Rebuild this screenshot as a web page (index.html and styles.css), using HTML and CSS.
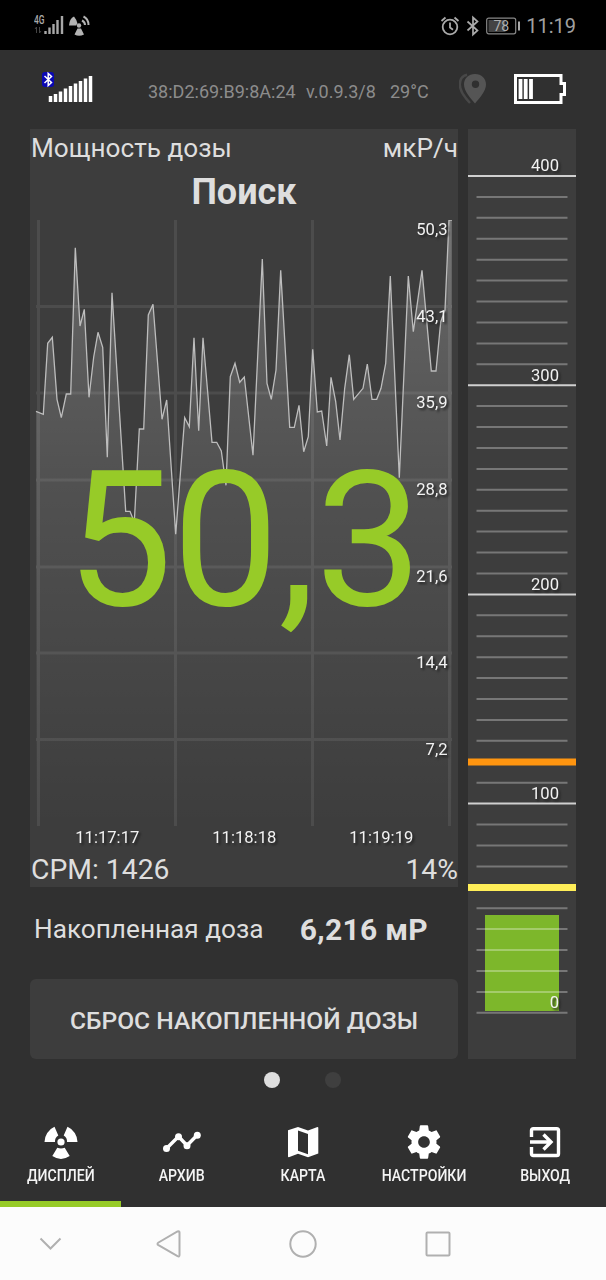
FILE: index.html
```html
<!DOCTYPE html>
<html lang="ru">
	<head>
		<meta charset="utf-8">
		<meta name="viewport" content="width=device-width, initial-scale=1.0">
		<title>Поиск</title>
		<link rel="stylesheet" href="styles.css">
	</head>
	<body>

		<!-- status bar -->
		<div class="status">
			<svg class="status-left" width="58" height="26" viewBox="0 0 58 26">
				<text class="net" x="0" y="11" textLength="10.500" lengthAdjust="spacingAndGlyphs">4G</text>
				<path d="M2.500 20v-6l-1.500 2M5.500 14v6l1.500-2" stroke="#444" fill="none"/>
				<path d="M11.500 18v3M15.500 14.500v6.500M19.500 11v10M23.500 7v14M28 3v18" stroke="#a8a8a8" stroke-width="2.400"/>
				<g fill="#b4b4b4">
					<circle cx="45" cy="12.500" r="2.200"/>
					<path d="M35 12.500q.500-7 5-9q2.500 3 3.500 7l-1.500 2zM43.500 15.500h3.500l3 6q-5 2.500-9.500 0z"/>
				</g>
				<path d="M48 7.500q3 1.500 3 4.500M49.500 3.500q5 2.500 5 8.500" stroke="#b4b4b4" stroke-width="2" fill="none"/>
			</svg>
			<div class="status-right">
				<svg width="20" height="22" viewBox="0 0 20 22" fill="none" stroke="#aaa" stroke-width="1.800">
					<circle cx="10" cy="12" r="7.300"/>
					<path d="M10 7.500v5l3 2.200M1.500 6l4-3.500M18.500 6l-4-3.500"/>
				</svg>
				<svg width="14" height="22" viewBox="0 0 14 22" fill="none" stroke="#aaa" stroke-width="1.700">
					<path d="M1.500 6.500l10 9L7 19.500v-17l4.500 4-10 9"/>
				</svg>
				<svg width="35" height="18" viewBox="0 0 35 18">
					<rect x=".7" y="1.200" width="29" height="15.600" rx="2" fill="none" stroke="#888" stroke-width="1.200"/>
					<rect x="2.500" y="3" width="17" height="12" fill="#444"/>
					<path d="M33 4.500v9" stroke="#aaa" stroke-width="2"/>
					<text class="charge" x="7.500" y="14">78</text>
				</svg>
				<span class="clock">11:19</span>
			</div>
		</div>

		<!-- device line -->
		<div class="device">
			<svg class="signal" width="54" height="34" viewBox="0 0 54 34">
				<rect x="2" y="2" width="12" height="15" rx="3" fill="#0a08b4"/>
				<path d="M4.500 6l7 6.500-3.300 3V3.500l3.300 3-7 6.500" fill="none" stroke="#fff" stroke-width="1.500"/>
				<path d="M10.500 26v6M15.500 24v8M20.500 21.500v10.500M25.500 18.500v13.500M30.500 16v16M35.500 13.500v18.500M40.500 11v21M45.500 8.500v23.500M50.500 6v26" stroke="#fff" stroke-width="3.500"/>
			</svg>
			<div class="device-info">
				<span class="mac">38:D2:69:B9:8A:24</span>
				<span class="version">v.0.9.3/8</span>
				<span>29°C</span>
			</div>
			<svg class="pin" width="28" height="32" viewBox="0 0 28 32">
				<path d="M8 1.800C3 3 .8 7 .8 11.500c0 6 4.500 12.500 10.200 18.500" fill="none" stroke="#484848" stroke-width="2.500"/>
				<path fill-rule="evenodd" fill="#555" d="M16 1C9.500 1 5 5.500 5 11.500c0 7 7 14 11 19 4-5 11-12 11-19C27 5.500 22.500 1 16 1zm.5 6.500a3.700 3.700 0 1 1 0 7.400 3.700 3.700 0 0 1 0-7.400z"/>
			</svg>
			<svg class="battery" width="52" height="30" viewBox="0 0 52 30">
				<path d="M1.500 1.500h45.500v8h3.500v11h-3.500v8h-45.500z" fill="none" stroke="#fff" stroke-width="3"/>
				<path d="M6.500 5v20M11.700 5v20M17 5v20" stroke="#fff" stroke-width="3.800"/>
			</svg>
		</div>

		<div class="main">
			<div class="left">
				<div class="rate">
					<div class="rate-head">
						<span class="rate-name">Мощность дозы</span>
						<span class="rate-unit">мкР/ч</span>
					</div>
					<div class="mode">Поиск</div>
					<svg class="chart" width="428" height="630" viewBox="30 220 428 630">
						<defs>
							<linearGradient id="area" gradientUnits="userSpaceOnUse" x1="0" y1="220" x2="0" y2="826">
								<stop offset="0" stop-color="#fff" stop-opacity=".22"/>
								<stop offset=".45" stop-color="#fff" stop-opacity=".1"/>
								<stop offset="1" stop-color="#fff" stop-opacity="0"/>
							</linearGradient>
						</defs>
						<path class="grid" d="M38.500 220V826M175.500 220V826M312.500 220V826M449.500 220V826M36 306.500H452M36 393H452M36 480H452M36 567H452M36 653H452M36 739.500H452"/>
						<path fill="url(#area)" d="M36 411.300L43.300 414.300 47.700 343.300 52.300 337.300 57 399.300 61.300 417.700 66.300 394 70.700 394 75.300 247.700 80 326 84.300 309.300 89 397.300 93.700 357 98 332.300 102.700 347.300 107.300 457.300 112 292.700 125.700 511.300 130 511.300 134.300 522 139.300 429 143.700 429 148.300 315 153 304.300 162 419.300 166.700 400 175.700 534.300 184.700 417.700 189.300 426.700 194 337.700 198.700 430.700 203 337.700 212 442.300 216.700 442.300 221.300 451 226 485.300 230.300 376.700 235 363.300 239.700 382.300 244.300 377 253 455.300 262.300 259 267 383.300 271.300 399.300 276 370 280.700 270.300 289.700 427.300 294.300 427.300 299 405.300 303.700 451.700 308.300 436.700 312.700 349.300 317.300 412 321.700 411 326.700 446 331 377.300 335.700 401.700 340 440 344.700 388.300 349.300 354.700 353.700 399.300 363 388.300 367.300 364 372 399.300 376.700 399.300 381 388.300 385.700 363.300 390.300 276 399.300 477.700 408.300 276 413.300 331.700 422 270.300 431.300 371 436 371 440.700 322 445 310 449 220 452 220V826H36z"/>
						<path class="line" d="M36 411.300L43.300 414.300 47.700 343.300 52.300 337.300 57 399.300 61.300 417.700 66.300 394 70.700 394 75.300 247.700 80 326 84.300 309.300 89 397.300 93.700 357 98 332.300 102.700 347.300 107.300 457.300 112 292.700 125.700 511.300 130 511.300 134.300 522 139.300 429 143.700 429 148.300 315 153 304.300 162 419.300 166.700 400 175.700 534.300 184.700 417.700 189.300 426.700 194 337.700 198.700 430.700 203 337.700 212 442.300 216.700 442.300 221.300 451 226 485.300 230.300 376.700 235 363.300 239.700 382.300 244.300 377 253 455.300 262.300 259 267 383.300 271.300 399.300 276 370 280.700 270.300 289.700 427.300 294.300 427.300 299 405.300 303.700 451.700 308.300 436.700 312.700 349.300 317.300 412 321.700 411 326.700 446 331 377.300 335.700 401.700 340 440 344.700 388.300 349.300 354.700 353.700 399.300 363 388.300 367.300 364 372 399.300 376.700 399.300 381 388.300 385.700 363.300 390.300 276 399.300 477.700 408.300 276 413.300 331.700 422 270.300 431.300 371 436 371 440.700 322 445 310 449 220 452 220"/>
						<g class="label" text-anchor="end">
							<text x="447.500" y="235">50,3</text>
							<text x="447.500" y="321.500">43,1</text>
							<text x="447.500" y="408">35,9</text>
							<text x="447.500" y="495">28,8</text>
							<text x="447.500" y="581.500">21,6</text>
							<text x="447.500" y="667.500">14,4</text>
							<text x="447.500" y="754.500">7,2</text>
						</g>
						<g class="label" text-anchor="middle">
							<text x="107.300" y="843">11:17:17</text>
							<text x="244.300" y="843">11:18:18</text>
							<text x="381.300" y="843">11:19:19</text>
						</g>
						<text class="value" x="66" y="605">50,3</text>
					</svg>
					<div class="rate-foot">
						<span>CPM: 1426</span>
						<span>14%</span>
					</div>
				</div>

				<div class="total">
					<span class="total-name">Накопленная доза</span>
					<span class="total-value">6,216 мР</span>
				</div>
				<button class="reset" type="button">СБРОС НАКОПЛЕННОЙ ДОЗЫ</button>
			</div>

			<!-- scale 0..400 -->
			<svg class="scale" width="108" height="930" viewBox="0 0 108 930">
				<rect x="17" y="786" width="74" height="96" fill="#7db72b"/>
				<path class="minor" d="M8.500 67.900h91M8.500 88.800h91M8.500 109.800h91M8.500 130.700h91M8.500 151.600h91M8.500 172.500h91M8.500 193.400h91M8.500 214.400h91M8.500 235.300h91M8.500 277.100h91M8.500 298h91M8.500 319h91M8.500 339.900h91M8.500 360.800h91M8.500 381.700h91M8.500 402.600h91M8.500 423.600h91M8.500 444.500h91M8.500 486.300h91M8.500 507.200h91M8.500 528.200h91M8.500 549.100h91M8.500 570h91M8.500 590.900h91M8.500 611.800h91M8.500 653.700h91M8.500 695.500h91M8.500 716.400h91M8.500 737.400h91M8.500 779.200h91M8.500 800.100h91M8.500 821h91M8.500 842h91M8.500 862.900h91M8.500 883.800h91"/>
				<path class="major" d="M0 47h108M0 256.200h108M0 465.400h108M0 674.600h108"/>
				<rect y="629.500" width="108" height="7" fill="#ff9510"/>
				<rect y="755" width="108" height="7" fill="#ffee58"/>
				<g class="label" text-anchor="end">
					<text x="91" y="42">400</text>
					<text x="91" y="252">300</text>
					<text x="91" y="461">200</text>
					<text x="91" y="670">100</text>
					<text x="91" y="879">0</text>
				</g>
			</svg>
		</div>

		<div class="dots">
			<span class="dot active"></span>
			<span class="dot"></span>
		</div>

		<div class="tabs">
			<div class="tab active">
				<svg width="36" height="36" viewBox="0 0 36 36" fill="#fff">
					<circle cx="18" cy="18" r="3.600"/>
					<path d="M1.500 18a16.500 16.500 0 0 1 10-15.200L15.300 11.500a7 7 0 0 0-3.300 6.500zM34.500 18a16.500 16.500 0 0 0-10-15.200L20.700 11.500a7 7 0 0 1 3.300 6.500zM14.300 23.800q3.700 1.600 7.400 0l5 8.200q-8.700 5.800-17.400 0z"/>
				</svg>
				<span>ДИСПЛЕЙ</span>
			</div>
			<div class="tab">
				<svg width="40" height="36" viewBox="0 0 40 36" fill="#fff">
					<path d="M4.500 24.500L16.500 12.500 25 21.500 35.300 11" fill="none" stroke="#fff" stroke-width="3.400"/>
					<circle cx="4.500" cy="24.500" r="3.500"/>
					<circle cx="16.500" cy="12.700" r="3.500"/>
					<circle cx="25" cy="21.700" r="3.500"/>
					<circle cx="35.300" cy="11.200" r="3.500"/>
				</svg>
				<span>АРХИВ</span>
			</div>
			<div class="tab">
				<svg width="36" height="36" viewBox="0 0 36 36">
					<path fill="#fff" fill-rule="evenodd" d="M3 6.300L13 3l10 3.500L32.500 3q.8 0 .8.800V29.500L23 33.200l-10-3.500L3.800 33.200Q3 33.200 3 32.500zM13 6.500v20.200l10 3.500V10z"/>
				</svg>
				<span>КАРТА</span>
			</div>
			<div class="tab">
				<svg width="40" height="40" viewBox="0 0 24 24">
					<path fill="#fff" d="M19.430 12.980c.04-.32.07-.64.07-.98s-.03-.66-.07-.98l2.110-1.650c.19-.15.24-.42.12-.64l-2-3.460c-.12-.22-.39-.3-.61-.22l-2.490 1c-.52-.4-1.080-.73-1.690-.98l-.38-2.650C14.460 2.180 14.250 2 14 2h-4c-.25 0-.46.18-.49.42l-.38 2.650c-.61.25-1.170.59-1.690.98l-2.490-1c-.23-.09-.49 0-.61.22l-2 3.460c-.13.22-.07.49.12.64l2.110 1.650c-.04.32-.07.65-.07.98s.03.66.07.98l-2.110 1.650c-.19.15-.24.42-.12.64l2 3.460c.12.22.39.3.61.22l2.490-1c.52.4 1.080.73 1.690.98l.38 2.650c.03.24.24.42.49.42h4c.25 0 .46-.18.49-.42l.38-2.650c.61-.25 1.170-.59 1.690-.98l2.490 1c.23.09.49 0 .61-.22l2-3.460c.12-.22.07-.49-.12-.64l-2.110-1.650zM12 15.500c-1.930 0-3.500-1.570-3.500-3.500s1.570-3.500 3.500-3.500 3.500 1.570 3.500 3.500-1.570 3.500-3.500 3.500z"/>
				</svg>
				<span>НАСТРОЙКИ</span>
			</div>
			<div class="tab">
				<svg width="36" height="36" viewBox="0 0 36 36" fill="none" stroke="#fff" stroke-width="3.400">
					<path d="M4.500 13V6.500q0-1.800 1.800-1.800H29.700q1.800 0 1.800 1.800V29.700q0 1.800-1.800 1.800H6.300q-1.800 0-1.800-1.800V23M3 18H24M16.500 10.500L24 18l-7.500 7.500"/>
				</svg>
				<span>ВЫХОД</span>
			</div>
		</div>

		<!-- android keys -->
		<div class="keys">
			<svg width="24" height="30" viewBox="0 0 24 30"><path d="M2.500 9.500l10 10 10-10"/></svg>
			<svg width="28" height="30" viewBox="0 0 28 30"><path d="M3.500 13.500L22.500 2.500q2-.8 2 1V26q0 2-2 1.100L3.500 16.200q-2-1.300 0-2.700z"/></svg>
			<svg width="30" height="30" viewBox="0 0 30 30"><circle cx="15" cy="15" r="12.700"/></svg>
			<svg width="28" height="30" viewBox="0 0 28 30"><rect x="2.500" y="3.500" width="23" height="23" rx="1"/></svg>
		</div>

	</body>
</html>
```
FILE: styles.css
```css
*{
	box-sizing: border-box;
}
body{
	margin: 0;
	width: 606px;
	height: 1280px;
	display: flex;
	flex-direction: column;
	overflow: hidden;
	background-color: #303030;
	color: #dedede;
	font-family: Roboto, "Noto Sans", sans-serif;
}
svg{
	display: block;
	flex: none;
}

/* status bar */
.status{
	height: 50px;
	padding: 2px 30px 0 34px;
	display: flex;
	align-items: center;
	justify-content: space-between;
	background-color: #000;
}
.net{
	font-size: 12px;
	font-weight: 500;
	fill: #aaa;
}
.status-right{
	display: flex;
	align-items: center;
	gap: 6px;
}
.charge{
	font-size: 14px;
	fill: #b0b0b0;
}
.clock{
	margin-left: -1px;
	font-size: 20px;
	color: #a0a0a0;
}

/* device line */
.device{
	height: 79px;
	padding: 0 40px;
	display: flex;
	align-items: center;
}
.signal{
	margin-top: -6px;
}
.device-info{
	margin-left: 54px;
	width: 311px;
	display: flex;
	font-size: 18px;
	color: #8c8c8c;
	white-space: nowrap;
	line-height: 24px;
	padding-top: 4px;
}
.mac{
	width: 158px;
}
.version{
	width: 84px;
}
.pin{
	margin-top: -2px;
}
.battery{
	margin-left: 27px;
	margin-top: -2px;
}

.main{
	display: flex;
	gap: 10px;
	height: 930px;
	padding: 0 30px;
}
.left{
	width: 428px;
	display: flex;
	flex-direction: column;
}
.rate{
	height: 758px;
	background-color: #3d3d3d;
}
.rate-head{
	height: 40px;
	padding-left: 1px;
	display: flex;
	justify-content: space-between;
	font-size: 26.2px;
	line-height: 39px;
}
.mode{
	height: 51px;
	font-size: 36px;
	font-weight: 700;
	line-height: 46px;
	text-align: center;
}
.grid{
	stroke: #fff;
	stroke-opacity: .08;
	stroke-width: 3;
}
.line{
	fill: none;
	stroke: #bdbdbd;
	stroke-width: 1.3;
}
.label{
	font-size: 16.6px;
	fill: #f2f2f2;
	filter: drop-shadow(2px 2px 1px #222);
}
.value{
	font-size: 190px;
	letter-spacing: -.5px;
	fill: #97cb28;
}
.rate-foot{
	height: 37px;
	padding-left: 1px;
	display: flex;
	justify-content: space-between;
	font-size: 28.3px;
	line-height: 39px;
}
.total{
	height: 92px;
	padding: 0 30px 8px 4px;
	display: flex;
	align-items: center;
	justify-content: space-between;
}
.total-name{
	font-size: 26.2px;
}
.total-value{
	font-size: 30px;
	font-weight: 700;
	letter-spacing: .3px;
}
.reset{
	height: 80px;
	padding: 2px 0 0;
	border: 0;
	border-radius: 6px;
	background-color: #3d3d3d;
	color: #dedede;
	font-family: inherit;
	font-size: 24.6px;
	font-weight: 500;
}
.scale{
	background-color: #3d3d3d;
}
.minor{
	stroke: #fff;
	stroke-opacity: .3;
	stroke-width: 2;
}
.major{
	stroke: #d0d0d0;
	stroke-width: 2;
}

.dots{
	height: 41px;
	padding-right: 1px;
	display: flex;
	justify-content: center;
	align-items: center;
	gap: 45px;
}
.dot{
	width: 16px;
	height: 16px;
	border-radius: 50%;
	background-color: #3f3f3f;
}
.dot.active{
	background-color: #dedede;
}

/* bottom tabs */
.tabs{
	height: 107px;
	display: flex;
}
.tab{
	flex: 1;
	display: flex;
	flex-direction: column;
	align-items: center;
	padding-top: 22px;
	border-bottom: 6px solid transparent;
}
.tab.active{
	border-bottom-color: #97cb28;
}
.tab svg{
	height: 40px;
}
.tab span{
	margin-top: 3px;
	font-size: 17px;
	font-weight: 500;
	line-height: 20px;
	color: #f4f4f4;
	white-space: nowrap;
	transform: scaleX(.83);
}

.keys{
	flex: 1;
	display: flex;
	align-items: center;
	padding: 0 0 0 38px;
	background-color: #fcfcfc;
}
.keys svg{
	fill: none;
	stroke: #b0b0b0;
	stroke-width: 2;
}
.keys svg:nth-child(2){
	margin-left: 93px;
}
.keys svg:nth-child(3){
	margin-left: 105px;
}
.keys svg:nth-child(4){
	margin-left: 106px;
}
```
